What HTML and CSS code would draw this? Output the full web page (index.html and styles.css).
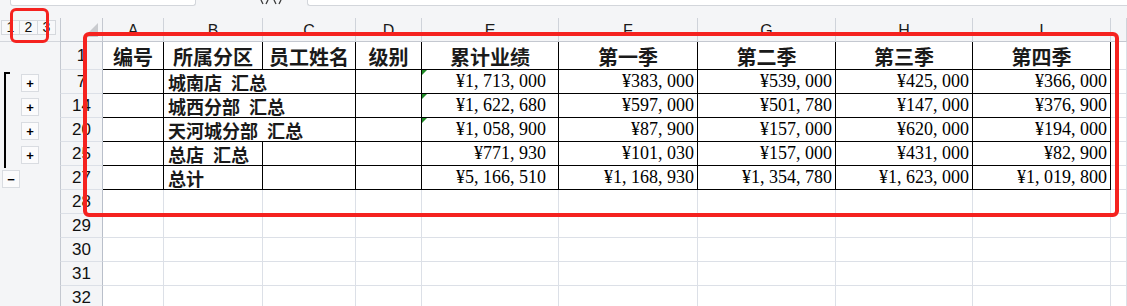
FILE: index.html
```html
<!DOCTYPE html>
<html lang="zh-CN">
<head>
<meta charset="utf-8">
<title>分类汇总</title>
<link rel="stylesheet" href="styles.css">
</head>
<body>
<div class="app">
  <div class="topbar">
    <div class="namebox"></div>
    <div class="fxzone"><svg class="fxicon" width="22" height="6" viewBox="0 0 22 6"><path d="M1 0 L3 4 M8 0 L6 4 M14 0 L16 4 M21 0 L19 4" stroke="#3a3a3a" stroke-width="1.3" fill="none"/></svg></div>
    <div class="formula"></div>
  </div>
  <div class="colstrip"></div>
  <div class="main">
    <div class="gutter">
      <div class="levels"><span class="lvl">1</span><span class="lvl">2</span><span class="lvl">3</span></div>
      <div class="r1slot"></div>
      <div class="group">
        <div class="gslot"><span class="tog">+</span></div>
        <div class="gslot"><span class="tog">+</span></div>
        <div class="gslot"><span class="tog">+</span></div>
        <div class="gslot"><span class="tog">+</span></div>
      </div>
      <div class="gslot"><span class="tog minus">−</span></div>
    </div>
    <div class="sheet">
      <div class="c corner"><svg class="tri" width="14" height="14" viewBox="0 0 14 14"><polygon points="14,0 14,14 0,14" fill="#c9cbcf"/></svg></div>
      <div class="c ch">A</div><div class="c ch">B</div><div class="c ch">C</div><div class="c ch">D</div><div class="c ch">E</div><div class="c ch">F</div><div class="c ch">G</div><div class="c ch">H</div><div class="c ch">I</div><div class="c ch"></div>

      <div class="c rh">1</div>
      <div class="c d hd">编号</div><div class="c d hd">所属分区</div><div class="c d hd">员工姓名</div><div class="c d hd">级别</div><div class="c d hd">累计业绩</div><div class="c d hd">第一季</div><div class="c d hd">第二季</div><div class="c d hd">第三季</div><div class="c d hd">第四季</div><div class="c"></div>

      <div class="c rh">7</div>
      <div class="c d"></div><div class="c d tx span2">城南店&ensp;汇总</div><div class="c d"></div>
      <div class="c d num e warn">¥1, 713, 000</div><div class="c d num">¥383, 000</div><div class="c d num">¥539, 000</div><div class="c d num">¥425, 000</div><div class="c d num">¥366, 000</div><div class="c"></div>

      <div class="c rh">14</div>
      <div class="c d"></div><div class="c d tx span2">城西分部&ensp;汇总</div><div class="c d"></div>
      <div class="c d num e warn">¥1, 622, 680</div><div class="c d num">¥597, 000</div><div class="c d num">¥501, 780</div><div class="c d num">¥147, 000</div><div class="c d num">¥376, 900</div><div class="c"></div>

      <div class="c rh">20</div>
      <div class="c d"></div><div class="c d tx span2">天河城分部&ensp;汇总</div><div class="c d"></div>
      <div class="c d num e warn">¥1, 058, 900</div><div class="c d num">¥87, 900</div><div class="c d num">¥157, 000</div><div class="c d num">¥620, 000</div><div class="c d num">¥194, 000</div><div class="c"></div>

      <div class="c rh">25</div>
      <div class="c d"></div><div class="c d tx">总店&ensp;汇总</div><div class="c d"></div><div class="c d"></div>
      <div class="c d num e">¥771, 930</div><div class="c d num">¥101, 030</div><div class="c d num">¥157, 000</div><div class="c d num">¥431, 000</div><div class="c d num">¥82, 900</div><div class="c"></div>

      <div class="c rh">27</div>
      <div class="c d"></div><div class="c d tx">总计</div><div class="c d"></div><div class="c d"></div>
      <div class="c d num e">¥5, 166, 510</div><div class="c d num">¥1, 168, 930</div><div class="c d num">¥1, 354, 780</div><div class="c d num">¥1, 623, 000</div><div class="c d num">¥1, 019, 800</div><div class="c"></div>

      <div class="c rh">28</div>
      <div class="c"></div><div class="c"></div><div class="c"></div><div class="c"></div><div class="c"></div><div class="c"></div><div class="c"></div><div class="c"></div><div class="c"></div><div class="c"></div>
      <div class="c rh">29</div>
      <div class="c"></div><div class="c"></div><div class="c"></div><div class="c"></div><div class="c"></div><div class="c"></div><div class="c"></div><div class="c"></div><div class="c"></div><div class="c"></div>
      <div class="c rh">30</div>
      <div class="c"></div><div class="c"></div><div class="c"></div><div class="c"></div><div class="c"></div><div class="c"></div><div class="c"></div><div class="c"></div><div class="c"></div><div class="c"></div>
      <div class="c rh">31</div>
      <div class="c"></div><div class="c"></div><div class="c"></div><div class="c"></div><div class="c"></div><div class="c"></div><div class="c"></div><div class="c"></div><div class="c"></div><div class="c"></div>
      <div class="c rh">32</div>
      <div class="c"></div><div class="c"></div><div class="c"></div><div class="c"></div><div class="c"></div><div class="c"></div><div class="c"></div><div class="c"></div><div class="c"></div><div class="c"></div>
    </div>
  </div>
  <div class="mark mark-level"></div>
  <div class="mark mark-table"></div>
</div>
</body>
</html>
```

FILE: styles.css
```css
* { box-sizing: border-box; }

body {
  margin: 0;
  width: 1127px;
  height: 306px;
  overflow: hidden;
  background: #f4f5f7;
  font-family: "Liberation Sans", Arial, sans-serif;
  color: #1a1a1a;
}

.app {
  position: relative;
  height: 306px;
  overflow: hidden;
}

/* formula bar remnant */
.topbar {
  display: flex;
  height: 6px;
}
.namebox {
  margin-left: 10px;
  width: 186px;
  height: 6px;
  background: #fff;
  border: 1px solid #d3d6db;
  border-top: none;
  border-radius: 0 0 3px 3px;
}
.fxzone {
  width: 111px;
  height: 6px;
  overflow: hidden;
  padding-left: 64px;
}
.fxicon { display: block; }
.formula {
  flex: 1;
  height: 6px;
  background: #fff;
  border: 1px solid #d3d6db;
  border-top: none;
  border-right: none;
  border-radius: 0 0 0 3px;
}

.colstrip { height: 12px; }

.main { display: flex; }

/* outline gutter */
.gutter {
  width: 60px;
  flex: none;
  display: flex;
  flex-direction: column;
}
.levels {
  height: 24px;
  display: flex;
  padding: 2px 0 0 1px;
  border-bottom: 1px solid #d3d6dc;
}
.lvl {
  width: 19px;
  height: 15px;
  margin-right: -1px;
  border: 1px solid #d5d8dd;
  background: #f7f8fa;
  font-size: 14px;
  line-height: 13px;
  text-align: center;
  color: #111;
}
.r1slot { height: 28px; }
.group { position: relative; }
.group::before {
  content: "";
  position: absolute;
  left: 4px;
  top: 2px;
  bottom: -2px;
  width: 2px;
  background: #000;
}
.group::after {
  content: "";
  position: absolute;
  left: 4px;
  top: 2px;
  width: 6px;
  height: 2px;
  background: #000;
}
.gslot {
  height: 24px;
  padding-top: 4px;
}
.tog {
  display: flex;
  width: 18px;
  height: 18px;
  margin-left: 21px;
  align-items: center;
  justify-content: center;
  background: #fbfbfc;
  border: 1px solid #d9dce1;
  font-weight: bold;
  font-size: 13px;
  line-height: 1;
  color: #000;
}
.minus { margin-left: 2px; }

/* sheet grid */
.sheet {
  flex: 1;
  min-width: 0;
  display: grid;
  grid-template-columns: 43px 61px 99px 93px 66px 137px 139px 138px 137px 138px 1fr;
  grid-template-rows: 24px 28px;
  grid-auto-rows: 24px;
  background: #fff;
}
.c {
  min-width: 0;
  display: flex;
  align-items: center;
  white-space: nowrap;
  border-right: 1px solid #dce0e7;
  border-bottom: 1px solid #dce0e7;
}
.corner {
  position: relative;
  background: #f4f5f7;
  border-left: 1px solid #c4c8d0;
  border-right-color: #c4c8d0;
  border-bottom-color: #c4c8d0;
  justify-content: flex-end;
  align-items: flex-end;
  padding: 0 4px 4px 0;
}
.tri { display: block; }
.ch {
  background: #f4f5f7;
  border-right-color: #cfd3da;
  border-bottom-color: #c4c8d0;
  justify-content: center;
  font-size: 16px;
  padding-top: 2px;
}
.rh {
  background: #f4f5f7;
  border-left: 1px solid #c4c8d0;
  border-right-color: #b9bfca;
  border-bottom-color: #dce0e7;
  justify-content: center;
  font-size: 17px;
  color: #111;
}

/* bordered data region */
.d {
  border-right-color: #000;
  border-bottom-color: #000;
}
.hd {
  justify-content: center;
  font-family: "Noto Sans CJK SC", sans-serif;
  font-weight: 700;
  font-size: 20px;
  padding-top: 2px;
}
.tx {
  font-family: "Noto Sans CJK SC", sans-serif;
  font-weight: 700;
  font-size: 18px;
  padding-left: 4px;
}
.span2 { grid-column: span 2; }
.num {
  justify-content: flex-end;
  font-family: "Liberation Serif", serif;
  font-size: 18px;
  padding-right: 3px;
  color: #000;
}
.num.e { padding-right: 12px; }
.warn { position: relative; }
.warn::before {
  content: "";
  position: absolute;
  left: 0;
  top: 0;
  border-style: solid;
  border-width: 5px 5px 0 0;
  border-color: #1f8a26 transparent transparent transparent;
}

/* red annotation frames */
.mark {
  position: absolute;
  border: 4px solid #f5221f;
  border-radius: 6px;
  pointer-events: none;
}
.mark-level {
  left: 10px;
  top: 8px;
  width: 39px;
  height: 35px;
  border-width: 3.5px;
}
.mark-table {
  left: 83px;
  top: 32px;
  width: 1036px;
  height: 185px;
}
```
